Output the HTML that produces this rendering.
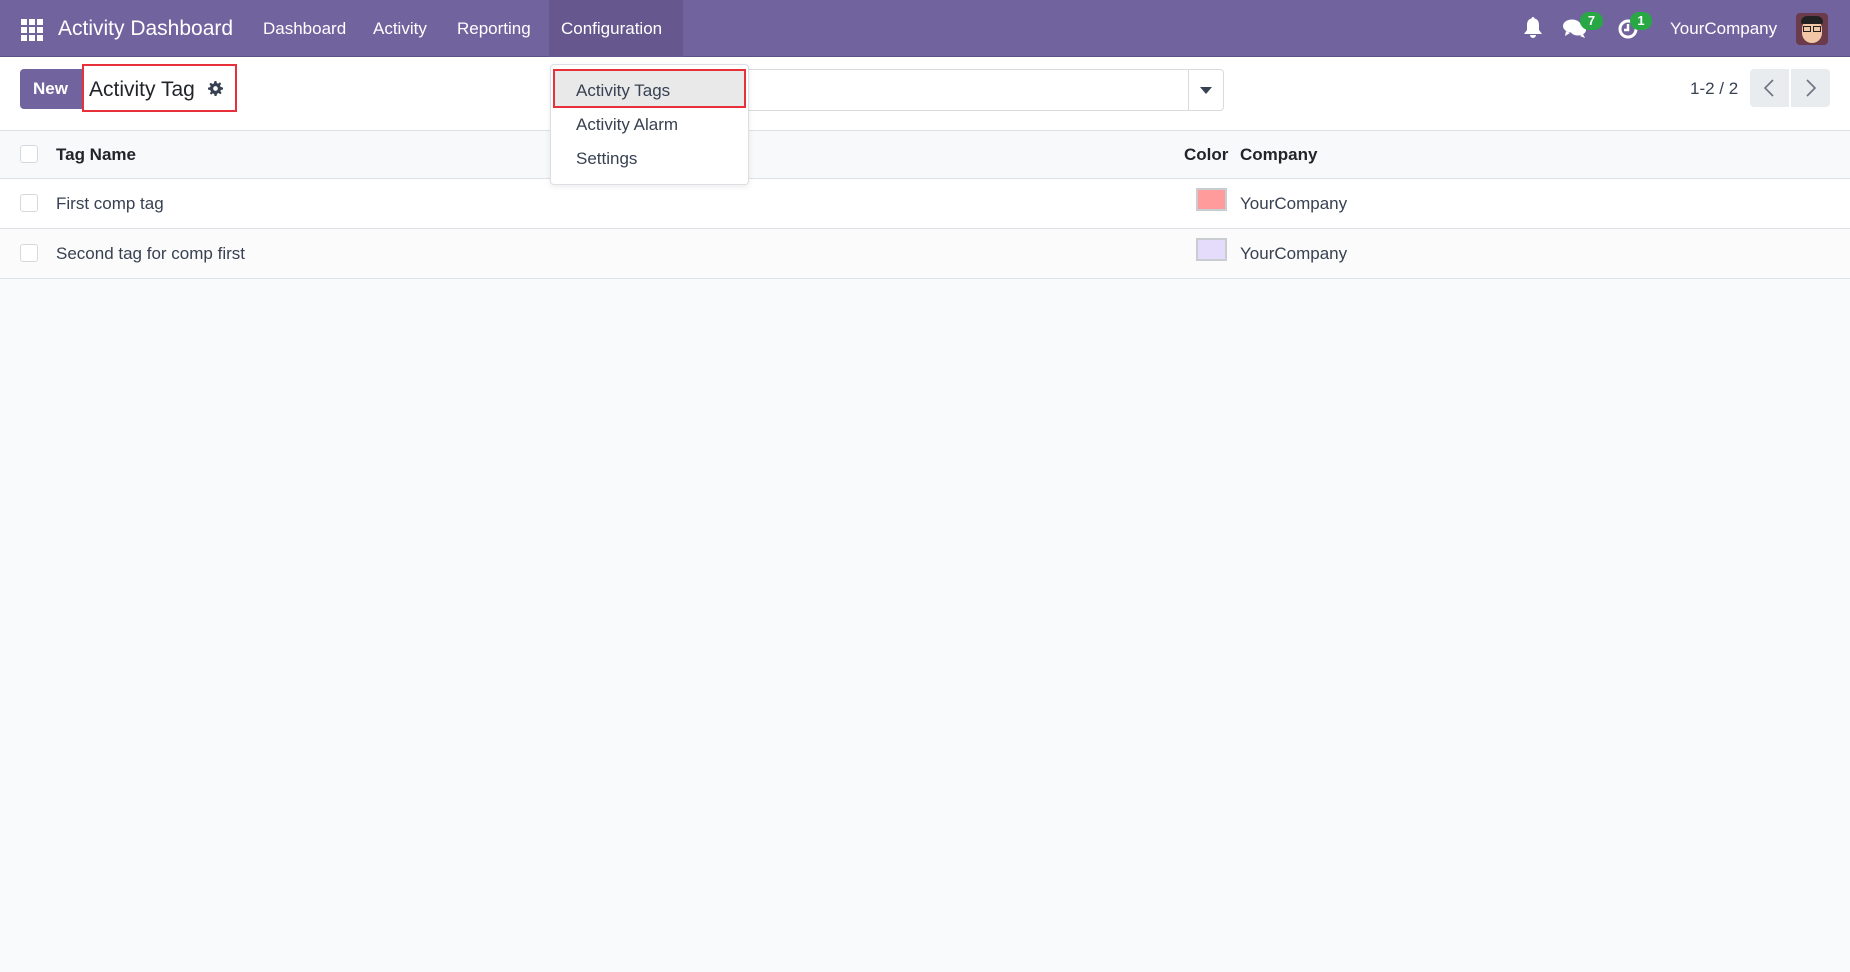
<!DOCTYPE html>
<html><head><style>
*{box-sizing:border-box;margin:0;padding:0}
body{width:1850px;height:972px;background:#f9fafb;font-family:"Liberation Sans",sans-serif;color:#374151;position:relative;overflow:hidden;font-size:17px}
.a{position:absolute;white-space:nowrap}
.nav{position:absolute;left:0;top:0;width:1850px;height:57px;background:#71639e;border-bottom:1px solid #5d5083}
.nav .a{color:#fff;top:19px;font-size:17px}
.cp{position:absolute;left:0;top:57px;width:1850px;height:74px;background:#fff;border-bottom:1px solid #dee2e6}
.row{position:absolute;left:0;width:1850px;border-bottom:1px solid #dee2e6}
.cb{position:absolute;left:20px;width:18px;height:18px;border:1px solid #d5d9de;border-radius:3px;background:#fff}
</style></head><body>
<div class="nav">
  <svg class="a" style="left:21px;top:19px" width="22" height="22" viewBox="0 0 22 22" fill="#fff">
    <rect x="0" y="0" width="6" height="6"/><rect x="8" y="0" width="6" height="6"/><rect x="16" y="0" width="6" height="6"/>
    <rect x="0" y="8" width="6" height="6"/><rect x="8" y="8" width="6" height="6"/><rect x="16" y="8" width="6" height="6"/>
    <rect x="0" y="16" width="6" height="6"/><rect x="8" y="16" width="6" height="6"/><rect x="16" y="16" width="6" height="6"/>
  </svg>
  <div class="a" style="left:58px;top:17px;font-size:21px">Activity Dashboard</div>
  <div class="a" style="left:263px">Dashboard</div>
  <div class="a" style="left:373px">Activity</div>
  <div class="a" style="left:457px">Reporting</div>
  <div style="position:absolute;left:549px;top:0;width:134px;height:57px;background:#66588f"></div>
  <div class="a" style="left:561px">Configuration</div>
  <svg class="a" style="left:1523px;top:17px" width="20" height="22" viewBox="0 0 20 22" fill="#fff"><path d="M10 0c1 0 1.5.7 1.5 1.5C15 2.3 16 5 16 8v5l3 4H1l3-4V8c0-3 1-5.7 4.5-6.5C8.5.7 9 0 10 0zM7 18h6a3 3 0 0 1-6 0z"/></svg>
  <svg class="a" style="left:1563px;top:18px" width="24" height="20" viewBox="0 0 24 20" fill="#fff"><ellipse cx="9" cy="8" rx="9" ry="6.5"/><path d="M3 13l-1 5 5-3z"/><ellipse cx="15" cy="12" rx="8" ry="5.5"/><path d="M20 16l2 4-5-2z"/></svg>
  <div class="a" style="left:1580px;top:12px;width:23px;height:18px;border-radius:9px;background:#28a745;font-size:13px;font-weight:bold;text-align:center;line-height:18px">7</div>
  <svg class="a" style="left:1617px;top:18px" width="22" height="22" viewBox="0 0 22 22"><circle cx="11" cy="11" r="8" stroke="#fff" stroke-width="3" fill="none"/><path d="M11 6v6h-4" stroke="#fff" stroke-width="2.5" fill="none"/></svg>
  <div class="a" style="left:1630px;top:12px;width:22px;height:18px;border-radius:9px;background:#28a745;font-size:13px;font-weight:bold;text-align:center;line-height:18px">1</div>
  <div class="a" style="left:1670px">YourCompany</div>
  <div class="a" style="left:1796px;top:13px;width:32px;height:32px;border-radius:4px;background:#6b3b4b;overflow:hidden">
    <div style="position:absolute;left:6px;top:6px;width:20px;height:24px;border-radius:10px;background:#f2c7a5"></div>
    <div style="position:absolute;left:5px;top:3px;width:22px;height:8px;border-radius:6px 6px 2px 2px;background:#222"></div>
    <div style="position:absolute;left:7px;top:13px;width:8px;height:6px;border:1.5px solid #222"></div>
    <div style="position:absolute;left:17px;top:13px;width:8px;height:6px;border:1.5px solid #222"></div>
  </div>
</div>
<div class="cp">
  <div class="a" style="left:20px;top:12px;width:64px;height:40px;background:#71639e;border-radius:4px 0 0 4px;color:#fff;font-weight:bold;font-size:17px;line-height:40px;padding-left:13px">New</div>
  <div class="a" style="left:82px;top:7px;width:155px;height:48px;border:2px solid #e8303a"></div>
  <div class="a" style="left:89px;top:21px;font-size:21px;color:#212529">Activity Tag</div>
  <svg class="a" style="left:208px;top:24px" width="15" height="15" viewBox="0 0 16 16" fill="#374151"><path d="M7 0h2l.4 2.2 1.5.6 1.8-1.3 1.4 1.4-1.3 1.8.6 1.5L16 7v2l-2.2.4-.6 1.5 1.3 1.8-1.4 1.4-1.8-1.3-1.5.6L9 16H7l-.4-2.2-1.5-.6-1.8 1.3-1.4-1.4 1.3-1.8-.6-1.5L0 9V7l2.2-.4.6-1.5L1.5 3.3l1.4-1.4 1.8 1.3 1.5-.6z"/><circle cx="8" cy="8" r="2.5" fill="#fff"/></svg>
  <div class="a" style="left:600px;top:12px;width:624px;height:42px;border:1px solid #d8dadd;border-radius:4px;background:#fff"></div>
  <div class="a" style="left:1188px;top:12px;width:1px;height:42px;background:#d8dadd"></div>
  <svg class="a" style="left:1200px;top:30px" width="12" height="7" viewBox="0 0 12 7" fill="#374151"><path d="M0 0h12L6 7z"/></svg>
  <div class="a" style="left:1690px;top:22px;color:#374151">1-2 / 2</div>
  <div class="a" style="left:1750px;top:12px;width:39px;height:38px;background:#e9ecef;border-radius:4px 0 0 4px"></div>
  <div class="a" style="left:1791px;top:12px;width:39px;height:38px;background:#e9ecef;border-radius:0 4px 4px 0"></div>
  <svg class="a" style="left:1764px;top:22px" width="10" height="18" viewBox="0 0 10 18"><path d="M9 1L1 9l8 8" stroke="#6b7280" stroke-width="1.6" fill="none"/></svg>
  <svg class="a" style="left:1806px;top:22px" width="10" height="18" viewBox="0 0 10 18"><path d="M1 1l8 8-8 8" stroke="#6b7280" stroke-width="1.6" fill="none"/></svg>
</div>
<div class="row" style="top:131px;height:48px;background:#f8f9fa">
  <div class="cb" style="top:14px"></div>
  <div class="a" style="left:56px;top:14px;font-weight:bold;color:#212529">Tag Name</div>
  <div class="a" style="left:1184px;top:14px;font-weight:bold;color:#212529">Color</div>
  <div class="a" style="left:1240px;top:14px;font-weight:bold;color:#212529">Company</div>
</div>
<div class="row" style="top:179px;height:50px;background:#fff">
  <div class="cb" style="top:15px"></div>
  <div class="a" style="left:56px;top:15px">First comp tag</div>
  <div class="a" style="left:1196px;top:9px;width:31px;height:23px;border:2px solid #c9cdd2;background:#ff9b9b"></div>
  <div class="a" style="left:1240px;top:15px">YourCompany</div>
</div>
<div class="row" style="top:229px;height:50px;background:#fbfbfb">
  <div class="cb" style="top:15px"></div>
  <div class="a" style="left:56px;top:15px">Second tag for comp first</div>
  <div class="a" style="left:1196px;top:9px;width:31px;height:23px;border:2px solid #c9cdd2;background:#e5dcfb"></div>
  <div class="a" style="left:1240px;top:15px">YourCompany</div>
</div>
<div class="a" style="left:550px;top:64px;width:199px;height:121px;background:#fff;border:1px solid #dcdfe3;border-radius:4px;box-shadow:0 2px 6px rgba(0,0,0,.08)">
  <div class="a" style="left:2px;top:4px;width:193px;height:39px;background:#e9e9ea;border:2px solid #e8303a"></div>
  <div class="a" style="left:25px;top:16px;color:#374151">Activity Tags</div>
  <div class="a" style="left:25px;top:50px">Activity Alarm</div>
  <div class="a" style="left:25px;top:84px">Settings</div>
</div>
</body></html>
